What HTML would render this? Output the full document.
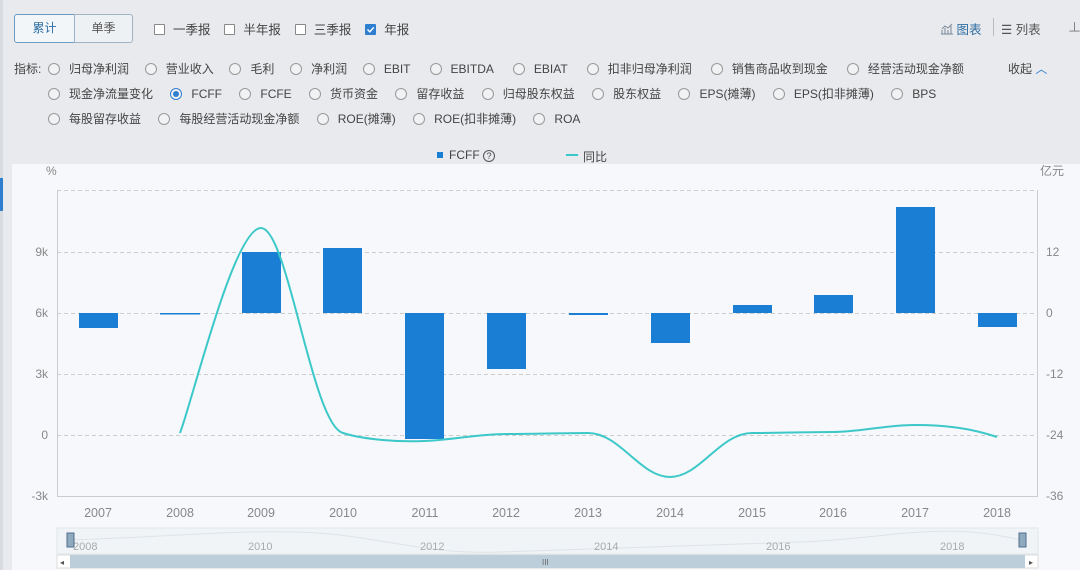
<!DOCTYPE html>
<html><head><meta charset="utf-8"><style>
*{margin:0;padding:0;box-sizing:border-box}
body{width:1080px;height:570px;overflow:hidden;background:#e8eaed;font-family:"Liberation Sans","Noto Sans CJK SC",sans-serif;color:#444;font-size:12px;position:relative}
.a{position:absolute;white-space:nowrap}
.btn{position:absolute;top:14px;height:29px;border:1px solid #9fb3c4;text-align:center;line-height:27px;font-size:12px;color:#555}
.cb{display:inline-block;width:11px;height:11px;border:1px solid #888;background:#fff;border-radius:1px;vertical-align:-1px;margin-right:8px}
.r{display:inline-block;width:12px;height:12px;border:1px solid #999;border-radius:50%;vertical-align:-2px;margin-right:9px;background:#f0f2f4;position:relative}
.row span.it{margin-right:14px}
.row1 span.it{margin-right:15.7px}
.row{position:absolute;left:48px;font-size:12px;color:#444}
</style></head><body>
<div class="a" style="left:0;top:0;width:3px;height:570px;background:#d8dce0"></div>
<div class="btn" style="left:14px;width:61px;background:#f2f6f9;border-color:#6c9bc0;color:#2f6fa3;border-radius:3px 0 0 3px">累计</div>
<div class="btn" style="left:74px;width:59px;background:#eef1f4;border-radius:0 3px 3px 0">单季</div>
<div class="a" style="left:154px;top:19px;font-size:12.5px"><span class="cb"></span>一季报 &nbsp;&nbsp;&nbsp;<span class="cb"></span>半年报 &nbsp;&nbsp;&nbsp;<span class="cb"></span>三季报 &nbsp;&nbsp;&nbsp;<span class="cb" style="background:#2f7fd0;border-color:#2f7fd0;position:relative"><svg width="11" height="11" style="position:absolute;left:-1px;top:-1px"><path d="M2.5 5.5l2.3 2.3 4-4.5" stroke="#fff" stroke-width="1.4" fill="none"/></svg></span>年报</div>
<div class="a" style="left:940px;top:19px;color:#2f6fa3;font-size:12.5px"><svg width="13" height="12" style="vertical-align:-1px"><path d="M1 11h12M2 11V7M5 11V5M8 11V7M11 11V3M2 6l3-3 3 2 4-4" stroke="#789" fill="none"/></svg> 图表</div>
<div class="a" style="left:993px;top:18px;width:1px;height:18px;background:#bbb"></div>
<div class="a" style="left:1001px;top:19px;color:#555;font-size:12.5px">☰ 列表</div>
<div class="a" style="left:1068px;top:17px;color:#777;font-size:13px">⊥</div>
<div class="a" style="left:14px;top:60px;font-size:12px">指标:</div>
<div class="row row1" style="top:60px"><span class="r"></span><span class="it">归母净利润</span><span class="r"></span><span class="it">营业收入</span><span class="r"></span><span class="it">毛利</span><span class="r"></span><span class="it">净利润</span><span class="r"></span><span class="it">EBIT</span> <span class="r"></span><span class="it">EBITDA</span> <span class="r"></span><span class="it">EBIAT</span> <span class="r"></span><span class="it">扣非归母净利润</span> <span class="r"></span><span class="it">销售商品收到现金</span> <span class="r"></span><span class="it">经营活动现金净额</span></div>
<div class="a" style="left:1008px;top:60px">收起 <span style="color:#2f7fd0">︿</span></div>
<div class="row" style="top:85px"><span class="r"></span><span class="it">现金净流量变化</span> <span class="r" style="border-color:#2f7fd0"><i style="position:absolute;left:2px;top:2px;width:6px;height:6px;border-radius:50%;background:#2f7fd0"></i></span><span class="it">FCFF</span> <span class="r"></span><span class="it">FCFE</span> <span class="r"></span><span class="it">货币资金</span> <span class="r"></span><span class="it">留存收益</span> <span class="r"></span><span class="it">归母股东权益</span> <span class="r"></span><span class="it">股东权益</span> <span class="r"></span><span class="it">EPS(摊薄)</span> <span class="r"></span><span class="it">EPS(扣非摊薄)</span> <span class="r"></span><span class="it">BPS</span></div>
<div class="row" style="top:110px"><span class="r"></span><span class="it">每股留存收益</span> <span class="r"></span><span class="it">每股经营活动现金净额</span> <span class="r"></span><span class="it">ROE(摊薄)</span> <span class="r"></span><span class="it">ROE(扣非摊薄)</span> <span class="r"></span><span class="it">ROA</span></div>
<div class="a" style="left:437px;top:152px;width:6px;height:6px;background:#1a7fd4"></div>
<div class="a" style="left:449px;top:148px">FCFF <span style="display:inline-block;width:12px;height:12px;border:1px solid #555;border-radius:50%;font-size:9px;line-height:10px;text-align:center;vertical-align:0">?</span></div>
<div class="a" style="left:566px;top:154px;width:12px;height:2px;background:#3cc8c8"></div>
<div class="a" style="left:583px;top:148px">同比</div>
<div class="a" style="left:12px;top:164px;width:1068px;height:406px;background:#f6f8fb"></div>
<div class="a" style="left:0;top:178px;width:3px;height:33px;background:#2f7fd0"></div>
<svg class="a" style="left:0;top:0" width="1080" height="570" font-family="Liberation Sans, Noto Sans CJK SC, sans-serif" font-size="12" fill="#888">
<g stroke="#ccc" stroke-dasharray="4,3"><line x1="57" y1="190.5" x2="1038" y2="190.5"/><line x1="57" y1="252.5" x2="1038" y2="252.5"/><line x1="57" y1="313.5" x2="1038" y2="313.5"/><line x1="57" y1="374.5" x2="1038" y2="374.5"/><line x1="57" y1="435.5" x2="1038" y2="435.5"/></g>
<g stroke="#ccc"><line x1="57.5" y1="190" x2="57.5" y2="496"/><line x1="1037.5" y1="190" x2="1037.5" y2="496"/><line x1="57" y1="496.5" x2="1038" y2="496.5"/></g>
<g fill="#1a7fd4"><rect x="79" y="313" width="39" height="15"/><rect x="160" y="313" width="40" height="1.5"/><rect x="242" y="252" width="39" height="61"/><rect x="323" y="248" width="39" height="65"/><rect x="405" y="313" width="39" height="126"/><rect x="487" y="313" width="39" height="56"/><rect x="569" y="313" width="39" height="2"/><rect x="651" y="313" width="39" height="30"/><rect x="733" y="305" width="39" height="8"/><rect x="814" y="295" width="39" height="18"/><rect x="896" y="207" width="39" height="106"/><rect x="978" y="313" width="39" height="14"/></g>
<path d="M180 433C193 399 234 228 261 228C288 228 312 425 343 433C365 440 400 442 424 441C450 440 480 434 506 434C530 434 565 433 588 433C620 433 640 477 670 477C700 477 720 433 752 433C780 433 805 432 833 432C860 432 885 425 915 425C945 425 970 428 997 437" stroke="#3cc8c8" stroke-width="2" fill="none"/>
<g text-anchor="end"><text x="48" y="256">9k</text><text x="48" y="317">6k</text><text x="48" y="378">3k</text><text x="48" y="439">0</text><text x="48" y="500">-3k</text></g>
<text x="46" y="175">%</text><text x="1040" y="175">亿元</text>
<g><text x="1046" y="256">12</text><text x="1046" y="317">0</text><text x="1046" y="378">-12</text><text x="1046" y="439">-24</text><text x="1046" y="500">-36</text></g>
<g text-anchor="middle" font-size="12.5"><text x="98" y="517">2007</text><text x="180" y="517">2008</text><text x="261" y="517">2009</text><text x="343" y="517">2010</text><text x="425" y="517">2011</text><text x="506" y="517">2012</text><text x="588" y="517">2013</text><text x="670" y="517">2014</text><text x="752" y="517">2015</text><text x="833" y="517">2016</text><text x="915" y="517">2017</text><text x="997" y="517">2018</text></g>
<rect x="57" y="528" width="981" height="26" fill="#f0f4f7" stroke="#e0e6ea"/>
<path d="M70 540C150 538 230 530 300 532C380 535 420 555 500 552C600 548 700 545 800 542C880 540 940 520 1020 540" stroke="#dde3e8" fill="none"/>
<g fill="#aaa" font-size="11"><text x="73" y="550">2008</text><text x="248" y="550">2010</text><text x="420" y="550">2012</text><text x="594" y="550">2014</text><text x="766" y="550">2016</text><text x="940" y="550">2018</text></g>
<rect x="67" y="533" width="7" height="14" fill="#8fa9bf" stroke="#4f6f8c"/>
<rect x="1019" y="533" width="7" height="14" fill="#8fa9bf" stroke="#4f6f8c"/>
<rect x="57" y="555" width="981" height="13" fill="#fff" stroke="#ddd"/>
<rect x="70" y="555" width="955" height="13" fill="#bcced9"/>
<text x="60" y="565" font-size="8" fill="#555">◂</text><text x="1029" y="565" font-size="8" fill="#555">▸</text>
<text x="542" y="565" font-size="8" fill="#666">III</text>
</svg>
</body></html>
